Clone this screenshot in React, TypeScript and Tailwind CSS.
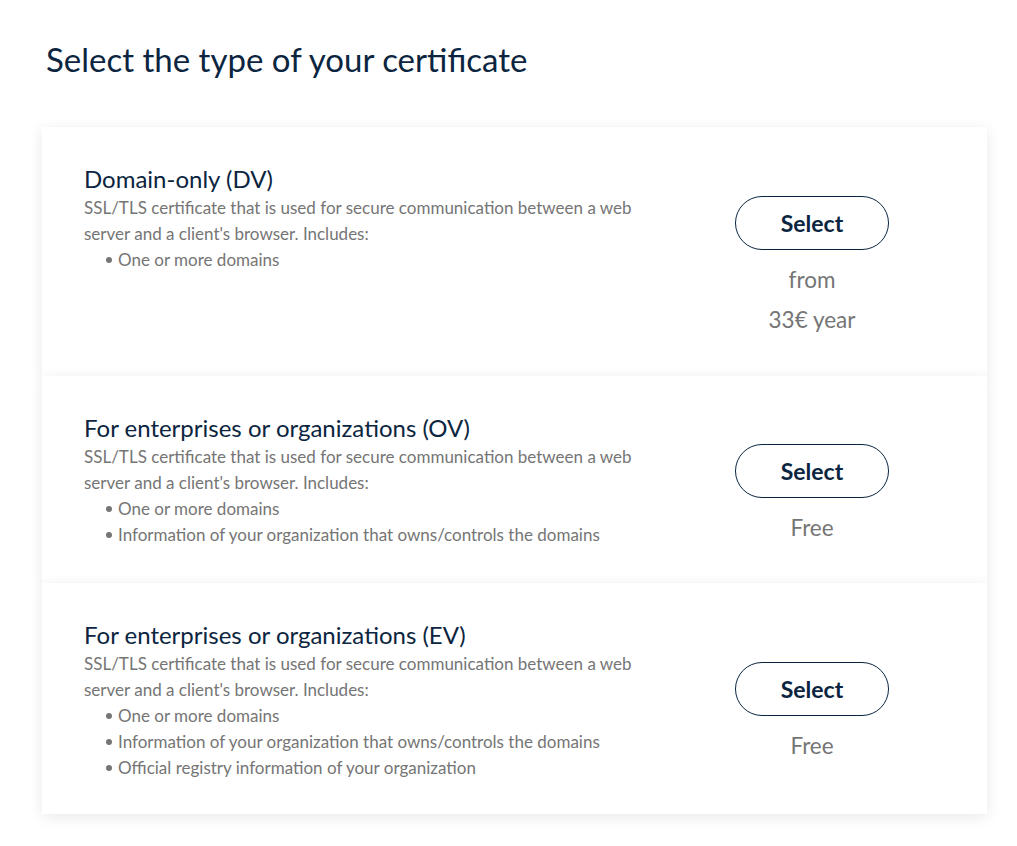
import React from "react";

type Card = {
  title: string;
  bullets: string[];
  price: string[];
  pt: string;
  pb: string;
  btnMt: string;
};

const cards: Card[] = [
  {
    title: "Domain-only (DV)",
    bullets: ["One or more domains"],
    price: ["from", "33€ year"],
    pt: "pt-[38px]",
    pb: "pb-[36px]",
    btnMt: "mt-[31px]",
  },
  {
    title: "For enterprises or organizations (OV)",
    bullets: [
      "One or more domains",
      "Information of your organization that owns/controls the domains",
    ],
    price: ["Free"],
    pt: "pt-[38px]",
    pb: "pb-[35px]",
    btnMt: "mt-[30px]",
  },
  {
    title: "For enterprises or organizations (EV)",
    bullets: [
      "One or more domains",
      "Information of your organization that owns/controls the domains",
      "Official registry information of your organization",
    ],
    price: ["Free"],
    pt: "pt-[38px]",
    pb: "pb-[33px]",
    btnMt: "mt-[41px]",
  },
];

export default function App() {
  return (
    <div
      className="min-h-[846px] bg-white pt-[36px] px-[42px]"
      style={{ fontFamily: "Lato, 'Open Sans', sans-serif" }}
    >
      <h1 className="pl-[4px] text-[33px] leading-[46px] text-[#0b2540]">
        Select the type of your certificate
      </h1>
      <div className="mt-[45px] w-[945px]">
        {cards.map((c) => (
          <div
            key={c.title}
            className={`flex bg-white shadow-[0_3px_14px_rgba(0,0,0,0.09)] pl-[42px] ${c.pt} ${c.pb}`}
          >
            <div className="w-[581px]">
              <h2 className="mb-[2px] text-[24px] leading-[28px] text-[#0b2540]">{c.title}</h2>
              <p className="w-[566px] text-[17px] leading-[26px] text-[#757575]">
                SSL/TLS certificate that is used for secure communication between a web server and a
                client's browser. Includes:
              </p>
              <ul className="pl-[22px]">
                {c.bullets.map((b) => (
                  <li key={b} className="flex items-center text-[17px] leading-[26px] text-[#757575]">
                    <span className="mr-[6px] inline-block h-[6px] w-[6px] rounded-full bg-[#757575]" />
                    {b}
                  </li>
                ))}
              </ul>
            </div>
            <div className={`ml-[70px] flex w-[154px] flex-col items-center ${c.btnMt}`}>
              <button className="h-[54px] w-[154px] rounded-full border border-[#0b2540] text-[23px] font-bold text-[#0b2540]">
                Select
              </button>
              <div className="mt-[10px] flex flex-col items-center">
                {c.price.map((p) => (
                  <span key={p} className="text-[22.5px] leading-[40px] text-[#757575]">
                    {p}
                  </span>
                ))}
              </div>
            </div>
          </div>
        ))}
      </div>
    </div>
  );
}
